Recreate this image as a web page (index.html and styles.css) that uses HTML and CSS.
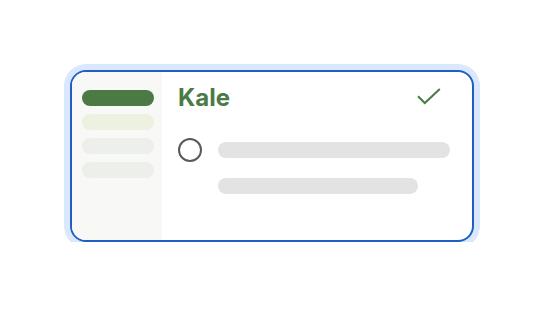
FILE: index.html
```html
<!DOCTYPE html>
<html>
<head>
<meta charset="utf-8">
<link rel="stylesheet" href="styles.css">
</head>
<body>
<div class="stage">
  <div class="card">
    <aside class="sidebar">
      <div class="pill pill-active"></div>
      <div class="pill pill-soft"></div>
      <div class="pill pill-muted"></div>
      <div class="pill pill-muted"></div>
    </aside>
    <main class="main">
      <div class="header">
        <h1 class="title">Kale</h1>
        <svg class="check" width="24" height="17" viewBox="0 0 24 17">
          <path d="M1 8.2 L7.8 15 L22.8 1" fill="none" stroke="#4b7a45" stroke-width="2"/>
        </svg>
      </div>
      <div class="row">
        <span class="radio"></span>
        <div class="lines">
          <div class="line line-long"></div>
          <div class="line line-short"></div>
        </div>
      </div>
    </main>
  </div>
</div>
</body>
</html>
```
FILE: styles.css
```css
html, body {
  margin: 0;
  padding: 0;
  background: #ffffff;
  font-family: Inter, "Noto Sans", sans-serif;
}
.stage {
  padding: 70px 0 0 70px;
}
.card {
  box-sizing: border-box;
  width: 404px;
  height: 172px;
  border: 2px solid #1f5fc4;
  border-radius: 16px;
  box-shadow: 0 0 0 6px #d9e8fc;
  display: flex;
  overflow: hidden;
  background: #ffffff;
}
.sidebar {
  width: 90px;
  background: #f8f8f6;
  padding: 18px 0 0 10px;
  box-sizing: border-box;
  display: flex;
  flex-direction: column;
  gap: 8px;
}
.pill {
  width: 72px;
  height: 16px;
  border-radius: 8px;
}
.pill-active { background: #4b7a45; }
.pill-soft { background: #ecf1e0; }
.pill-muted { background: #edefea; }
.main {
  flex: 1;
  padding: 12px 22px 0 16px;
}
.header {
  display: flex;
  justify-content: space-between;
  align-items: center;
  height: 28px;
}
.title {
  margin: 0;
  font-size: 24px;
  line-height: 28px;
  font-weight: 700;
  color: #4b7a45;
}
.check {
  margin-right: 9px;
  margin-top: -3px;
}
.row {
  margin-top: 26px;
  display: flex;
  gap: 16px;
}
.radio {
  box-sizing: border-box;
  width: 24px;
  height: 24px;
  border: 2px solid #5a5a5a;
  border-radius: 50%;
  flex-shrink: 0;
}
.lines {
  margin-top: 4px;
  display: flex;
  flex-direction: column;
  gap: 20px;
}
.line {
  height: 16px;
  border-radius: 8px;
  background: #e3e3e3;
}
.line-long { width: 232px; }
.line-short { width: 200px; }
```
